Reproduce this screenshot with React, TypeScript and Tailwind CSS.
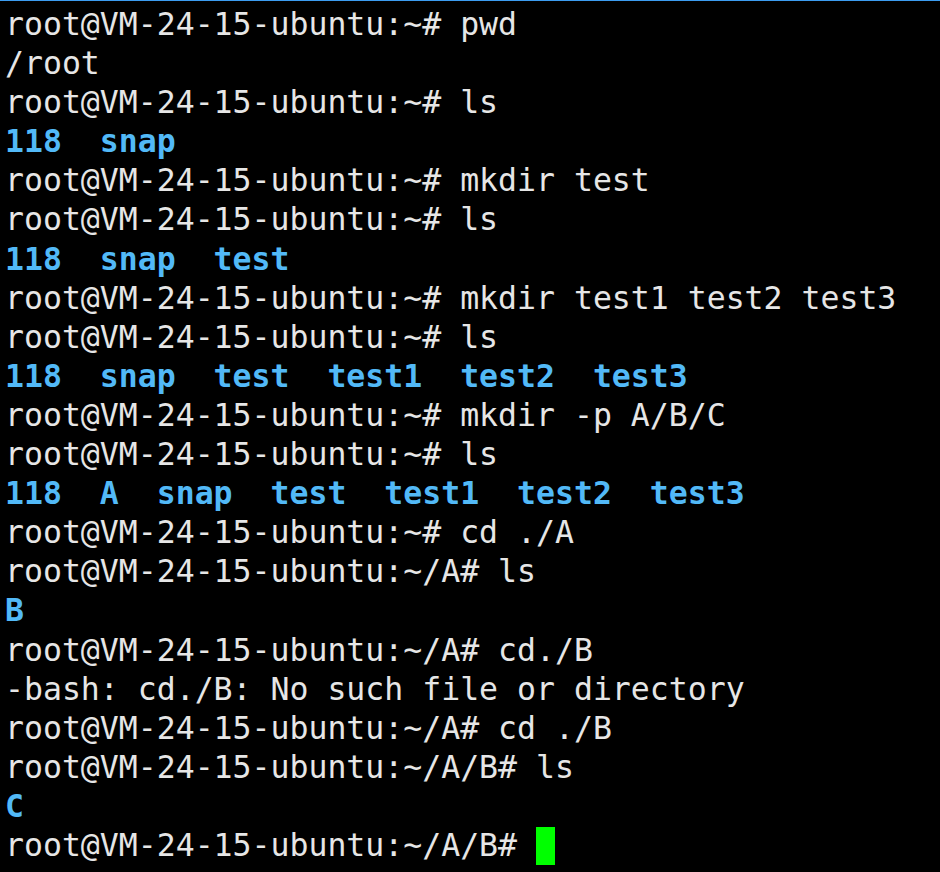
const lines: { text: string; kind: 'out' | 'dir' }[] = [
  { text: 'root@VM-24-15-ubuntu:~# pwd', kind: 'out' },
  { text: '/root', kind: 'out' },
  { text: 'root@VM-24-15-ubuntu:~# ls', kind: 'out' },
  { text: '118  snap', kind: 'dir' },
  { text: 'root@VM-24-15-ubuntu:~# mkdir test', kind: 'out' },
  { text: 'root@VM-24-15-ubuntu:~# ls', kind: 'out' },
  { text: '118  snap  test', kind: 'dir' },
  { text: 'root@VM-24-15-ubuntu:~# mkdir test1 test2 test3', kind: 'out' },
  { text: 'root@VM-24-15-ubuntu:~# ls', kind: 'out' },
  { text: '118  snap  test  test1  test2  test3', kind: 'dir' },
  { text: 'root@VM-24-15-ubuntu:~# mkdir -p A/B/C', kind: 'out' },
  { text: 'root@VM-24-15-ubuntu:~# ls', kind: 'out' },
  { text: '118  A  snap  test  test1  test2  test3', kind: 'dir' },
  { text: 'root@VM-24-15-ubuntu:~# cd ./A', kind: 'out' },
  { text: 'root@VM-24-15-ubuntu:~/A# ls', kind: 'out' },
  { text: 'B', kind: 'dir' },
  { text: 'root@VM-24-15-ubuntu:~/A# cd./B', kind: 'out' },
  { text: '-bash: cd./B: No such file or directory', kind: 'out' },
  { text: 'root@VM-24-15-ubuntu:~/A# cd ./B', kind: 'out' },
  { text: 'root@VM-24-15-ubuntu:~/A/B# ls', kind: 'out' },
  { text: 'C', kind: 'dir' },
];

export default function App() {
  return (
    <div className="w-[940px] h-[872px] bg-black border-t border-[#3c9cf0] overflow-hidden">
      <div className="pl-[5px] pt-[4px] font-['DejaVu_Sans_Mono',monospace] text-[31.5px] leading-[39.1px] whitespace-pre text-[#e6e6e6]">
        {lines.map((l, i) => (
          <div key={i} className={l.kind === 'dir' ? 'font-bold text-[#52b9f7]' : ''}>
            {l.text}
          </div>
        ))}
        <div className="flex items-center">
          <span>root@VM-24-15-ubuntu:~/A/B# </span>
          <span className="inline-block w-[19px] h-[38px] bg-[#00ff00]" />
        </div>
      </div>
    </div>
  );
}
